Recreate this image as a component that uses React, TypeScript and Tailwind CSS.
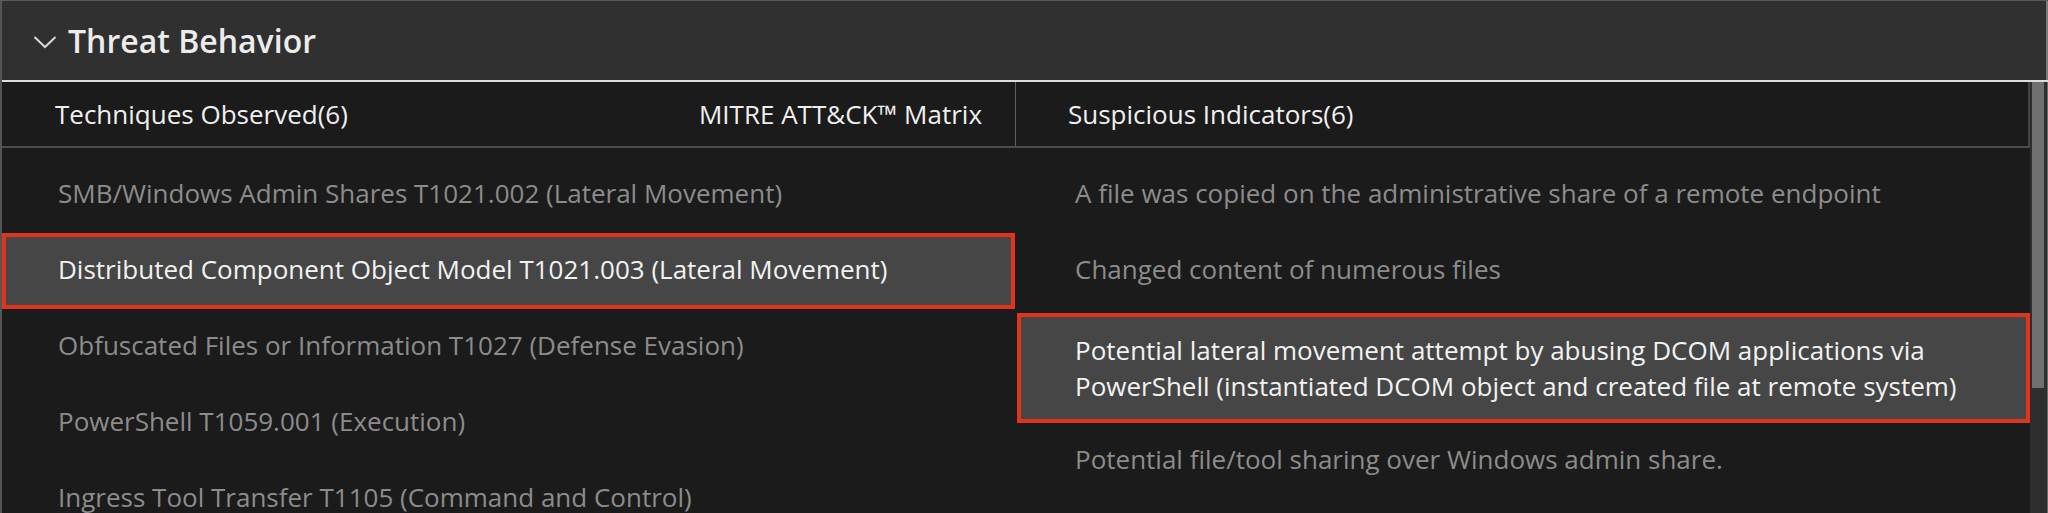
import React from "react";

interface Item {
  text: string;
  selected?: boolean;
}

const techniques: Item[] = [
  { text: "SMB/Windows Admin Shares T1021.002 (Lateral Movement)" },
  { text: "Distributed Component Object Model T1021.003 (Lateral Movement)", selected: true },
  { text: "Obfuscated Files or Information T1027 (Defense Evasion)" },
  { text: "PowerShell T1059.001 (Execution)" },
  { text: "Ingress Tool Transfer T1105 (Command and Control)" },
];

const indicators: Item[] = [
  { text: "A file was copied on the administrative share of a remote endpoint" },
  { text: "Changed content of numerous files" },
  {
    text: "Potential lateral movement attempt by abusing DCOM applications via PowerShell (instantiated DCOM object and created file at remote system)",
    selected: true,
  },
  { text: "Potential file/tool sharing over Windows admin share." },
];

const Row: React.FC<{ item: Item; pad: string; sel: string }> = ({ item, pad, sel }) => (
  <div
    className={
      item.selected
        ? `border-[4px] border-[#e2331d] bg-[#464646] text-[#f2f2f2] ${sel} ${pad}`
        : `border-[4px] border-transparent text-[#8c8c8c] py-[16px] ${pad}`
    }
  >
    {item.text}
  </div>
);

const App: React.FC = () => {
  return (
    <div
      className="w-[2048px] h-[513px] overflow-hidden bg-[#1b1b1b] border-t border-[#5a5a5a] border-l-2 border-l-[#555]"
      style={{ fontFamily: '"Open Sans", "Noto Sans", sans-serif' }}
    >
      <div className="h-[79px] bg-[#303030] flex items-center pl-[31px] border-r-2 border-[#7a7a7a]">
        <svg width="24" height="14" viewBox="0 0 24 14" className="mr-[11px] mt-[2px]">
          <path d="M1.5 2 L12 12 L22.5 2" fill="none" stroke="#d8d8d8" strokeWidth="2" />
        </svg>
        <h2 className="text-[32px] font-semibold text-[#ececec] leading-none">Threat Behavior</h2>
      </div>
      <div className="h-[2px] bg-[#dedede]" />
      <div className="flex">
        <div className="flex-1">
          <div className="h-[66px] grid grid-cols-[1014px_1fr] border-b-2 border-[#4c4c4c] border-r-2 border-r-[#444] text-[26px] text-[#f0f0f0]">
            <div className="flex items-center justify-between pl-[53px] pr-[33px] border-r border-[#5e5e5e]">
              <span>Techniques Observed(6)</span>
              <span>MITRE ATT&amp;CK™ Matrix</span>
            </div>
            <div className="flex items-center pl-[52px]">
              <span>Suspicious Indicators(6)</span>
            </div>
          </div>
          <div className="grid grid-cols-[1013px_1fr] gap-x-[2px] pt-[7px] text-[26px] leading-[36px]">
            <div className="flex flex-col">
              {techniques.map((t) => (
                <Row key={t.text} item={t} pad="pl-[52px]" sel="mt-[2px] mb-[-2px] pt-[14px] pb-[18px]" />
              ))}
            </div>
            <div className="flex flex-col">
              {indicators.map((t) => (
                <Row key={t.text} item={t} pad="pl-[54px] pr-[28px]" sel="mt-[6px] mb-[-2px] py-[15px]" />
              ))}
            </div>
          </div>
        </div>
        <div className="w-[18px] h-[432px] bg-[#2e2e2e] pl-[2px] pr-[3px] border-r border-[#6a6a6a]">
          <div className="h-[306px] bg-[#707070]" />
        </div>
      </div>
    </div>
  );
};

export default App;
